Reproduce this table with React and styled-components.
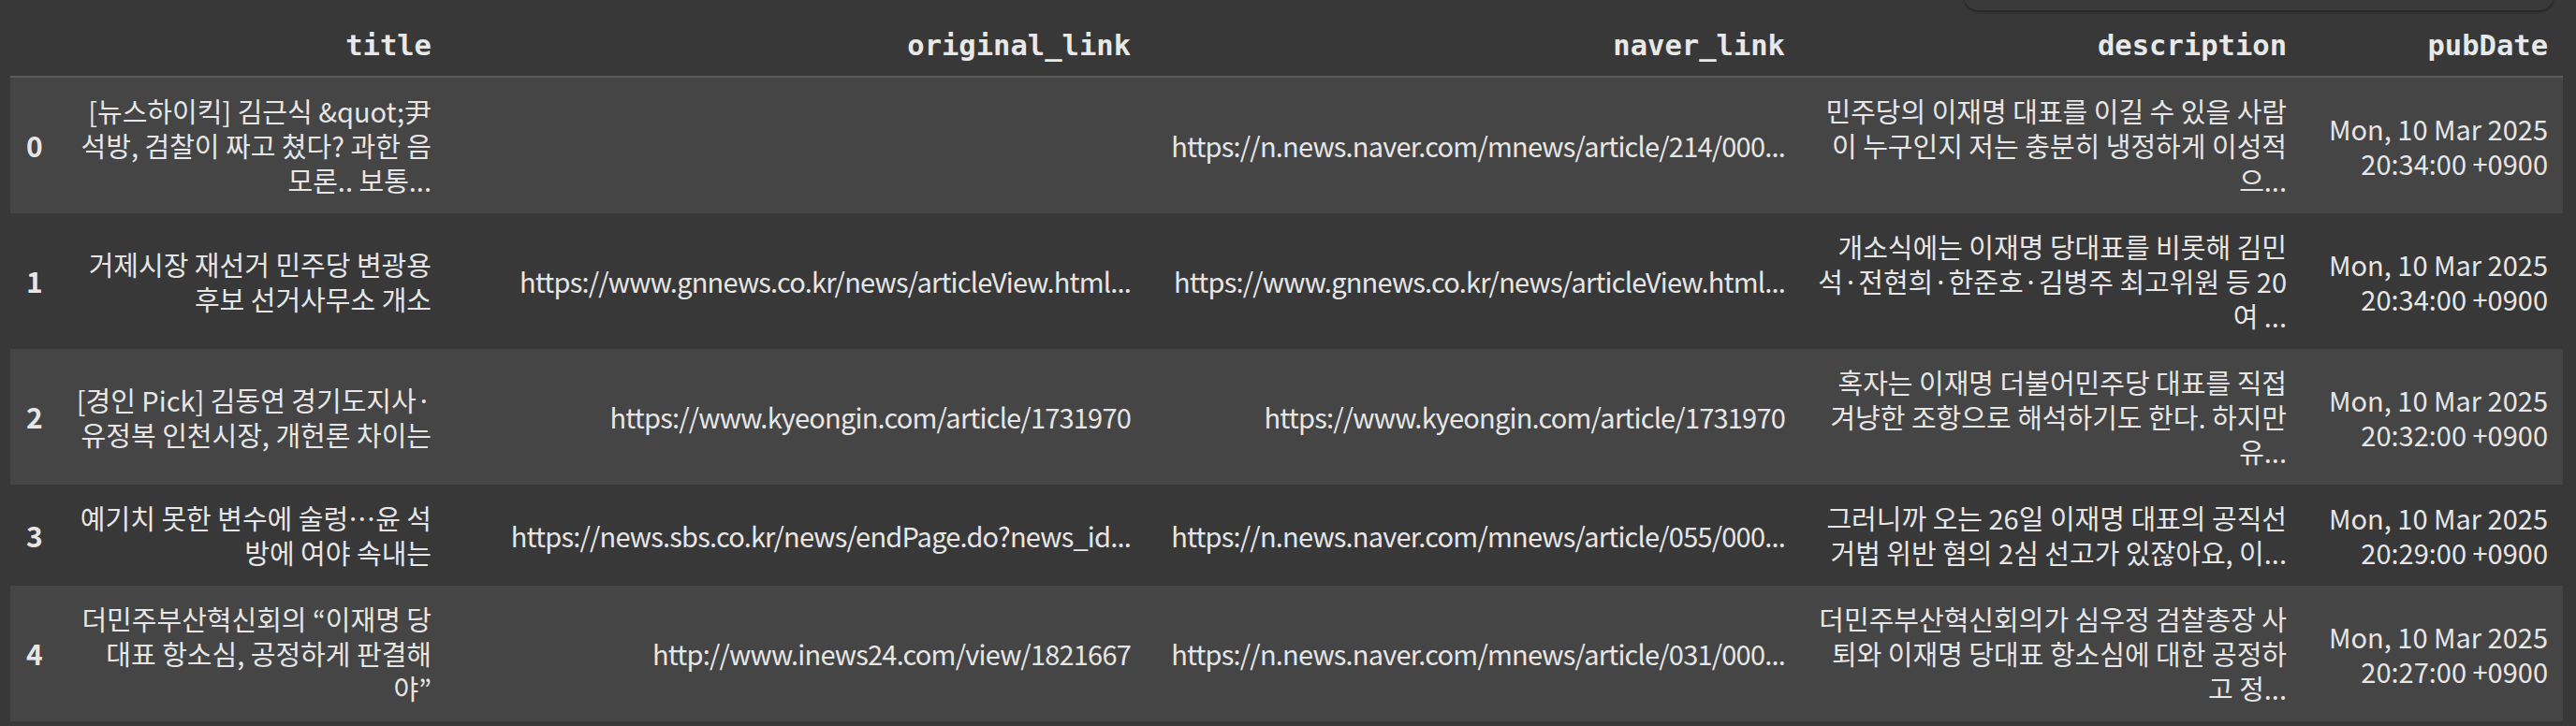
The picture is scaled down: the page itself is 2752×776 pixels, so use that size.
import React from 'react';
import styled, { createGlobalStyle } from 'styled-components';

const GlobalStyle = createGlobalStyle`
  html, body {
    margin: 0;
    padding: 0;
    background: #383838;
  }
`;

const Page = styled.div`
  position: relative;
  width: 2752px;
  height: 776px;
  overflow: hidden;
  background: #383838;
  padding-left: 11px;
  box-sizing: border-box;
`;

const FloatingBar = styled.div`
  position: absolute;
  top: -30px;
  left: 2098px;
  width: 630px;
  height: 41px;
  border-radius: 15px;
  background: #393939;
  box-shadow: 0 2px 3px rgba(0, 0, 0, 0.35);
`;

const Table = styled.table`
  table-layout: fixed;
  border-collapse: collapse;
  width: 2727px;
  color: #e6e6e6;
  font-family: "Noto Sans CJK KR", "Noto Sans", sans-serif;
  font-size: 29px;
  line-height: 37px;
`;

const HeadCell = styled.th`
  height: 82px;
  padding: 0 16px 14px;
  box-sizing: border-box;
  vertical-align: bottom;
  text-align: right;
  font-family: "DejaVu Sans Mono", "Liberation Mono", monospace;
  font-weight: bold;
  font-size: 30.5px;
  line-height: 37px;
  color: #e8e8e8;
  border-bottom: 2px solid #5a5a5a;
`;

const Row = styled.tr`
  background: ${p => (p.$striped ? '#454545' : 'transparent')};
`;

const IndexCell = styled.th`
  padding: 17px 0 17px 17px;
  text-align: left;
  vertical-align: middle;
  font-weight: bold;
  font-size: 30px;
`;

const Cell = styled.td`
  padding: 17px 16px;
  text-align: right;
  vertical-align: middle;
  white-space: nowrap;
  letter-spacing: ${p => (p.$link ? '-0.8px' : '0')};
`;

const Line = styled.div`
  white-space: nowrap;
`;

const columns = ['title', 'original_link', 'naver_link', 'description', 'pubDate'];
const widths = [51, 415, 747, 699, 536, 279];

const rows = [
  [
    ['[뉴스하이킥] 김근식 &quot;尹', '석방, 검찰이 짜고 쳤다? 과한 음', '모론.. 보통...'],
    [],
    ['https://n.news.naver.com/mnews/article/214/000...'],
    ['민주당의 이재명 대표를 이길 수 있을 사람', '이 누구인지 저는 충분히 냉정하게 이성적', '으...'],
    ['Mon, 10 Mar 2025', '20:34:00 +0900'],
  ],
  [
    ['거제시장 재선거 민주당 변광용', '후보 선거사무소 개소'],
    ['https://www.gnnews.co.kr/news/articleView.html...'],
    ['https://www.gnnews.co.kr/news/articleView.html...'],
    ['개소식에는 이재명 당대표를 비롯해 김민', '석·전현희·한준호·김병주 최고위원 등 20', '여 ...'],
    ['Mon, 10 Mar 2025', '20:34:00 +0900'],
  ],
  [
    ['[경인 Pick] 김동연 경기도지사·', '유정복 인천시장, 개헌론 차이는'],
    ['https://www.kyeongin.com/article/1731970'],
    ['https://www.kyeongin.com/article/1731970'],
    ['혹자는 이재명 더불어민주당 대표를 직접', '겨냥한 조항으로 해석하기도 한다. 하지만', '유...'],
    ['Mon, 10 Mar 2025', '20:32:00 +0900'],
  ],
  [
    ['예기치 못한 변수에 술렁…윤 석', '방에 여야 속내는'],
    ['https://news.sbs.co.kr/news/endPage.do?news_id...'],
    ['https://n.news.naver.com/mnews/article/055/000...'],
    ['그러니까 오는 26일 이재명 대표의 공직선', '거법 위반 혐의 2심 선고가 있잖아요, 이...'],
    ['Mon, 10 Mar 2025', '20:29:00 +0900'],
  ],
  [
    ['더민주부산혁신회의 “이재명 당', '대표 항소심, 공정하게 판결해', '야”'],
    ['http://www.inews24.com/view/1821667'],
    ['https://n.news.naver.com/mnews/article/031/000...'],
    ['더민주부산혁신회의가 심우정 검찰총장 사', '퇴와 이재명 당대표 항소심에 대한 공정하', '고 정...'],
    ['Mon, 10 Mar 2025', '20:27:00 +0900'],
  ],
];

// the two link columns are plain latin text
const isLink = j => j === 1 || j === 2;

const App = () => (
  <Page>
    <GlobalStyle />
    <FloatingBar />
    <Table>
      <colgroup>
        {widths.map((w, i) => (
          <col key={i} style={{ width: w }} />
        ))}
      </colgroup>
      <thead>
        <tr>
          <HeadCell />
          {columns.map(c => (
            <HeadCell key={c}>{c}</HeadCell>
          ))}
        </tr>
      </thead>
      <tbody>
        {rows.map((cells, i) => (
          <Row key={i} $striped={i % 2 === 0}>
            <IndexCell>{i}</IndexCell>
            {cells.map((lines, j) => (
              <Cell key={j} $link={isLink(j)}>
                {lines.map((l, k) => (
                  <Line key={k}>{l}</Line>
                ))}
              </Cell>
            ))}
          </Row>
        ))}
      </tbody>
    </Table>
  </Page>
);

export default App;
